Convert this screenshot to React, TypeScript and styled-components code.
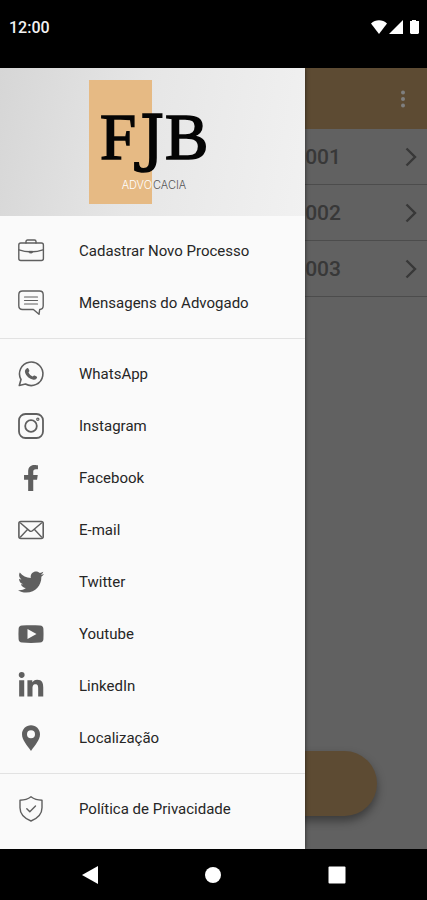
import React from "react";
import styled, { createGlobalStyle } from "styled-components";
import { FaFacebookF, FaTwitter, FaLinkedinIn } from "react-icons/fa";

const GlobalStyle = createGlobalStyle`
  *, *::before, *::after { box-sizing: border-box; }
  body {
    margin: 0;
    background: #000;
    font-family: Roboto, "Liberation Sans", sans-serif;
  }
  button { font: inherit; border: 0; padding: 0; background: none; cursor: pointer; }
`;

const Phone = styled.div`
  min-height: 100vh;
  display: flex;
  flex-direction: column;
  background: #000;
`;

const StatusBar = styled.header`
  height: 68px;
  padding: 18px 8px 0 9px;
  display: flex;
  align-items: flex-start;
  justify-content: space-between;
  color: #f2f2f2;
  font-size: 16px;
  line-height: 20px;
  font-weight: 500;
`;

const StatusIcons = styled.div`
  display: flex;
  align-items: center;
  padding-top: 2px;
  svg { display: block; }
`;

const Screen = styled.div`
  flex: 1;
  display: grid;
  grid-template-columns: minmax(0, 1fr);
  overflow: hidden;
  > * { grid-area: 1 / 1; }
`;

const Page = styled.main`
  display: flex;
  flex-direction: column;
  background: #c2c2c2;
`;

const AppBar = styled.div`
  height: 61px;
  padding: 0 14px;
  display: flex;
  align-items: center;
  justify-content: flex-end;
  background: #ba9666;
`;

const MenuButton = styled.button`
  width: 20px;
  height: 32px;
  display: grid;
  place-items: center;
`;

const ProcessList = styled.ul`
  list-style: none;
  margin: 0;
  padding: 0;
`;

const ProcessRow = styled.li`
  border-bottom: 1px solid #989898;
`;

const ProcessButton = styled.button`
  width: 100%;
  height: 55px;
  padding: 0 10px;
  display: flex;
  align-items: center;
  justify-content: flex-end;
  gap: 64px;
  color: #707070;
  font-size: 21px;
  font-weight: 500;
`;

const ActionButton = styled.button`
  height: 65px;
  margin: auto 50px 33px;
  border-radius: 33px;
  background: #ba9666;
  box-shadow: 0 5px 10px rgba(0, 0, 0, 0.4);
`;

const Scrim = styled.div`
  z-index: 1;
  background: rgba(0, 0, 0, 0.5);
`;

const Drawer = styled.aside`
  z-index: 2;
  width: calc(100% - 122px);
  background: #fafafa;
  box-shadow: 0 0 4px rgba(0, 0, 0, 0.6);
`;

const DrawerHeader = styled.div`
  height: 148px;
  padding-top: 12px;
  display: flex;
  justify-content: center;
  background: linear-gradient(100deg, #d6d6d6 0%, #e6e6e6 45%, #f1f1f1 100%);
`;

const MenuGroup = styled.ul`
  list-style: none;
  margin: 0;
  padding: 9px 0;
  & + & { border-top: 1px solid #e2e2e2; }
`;

const MenuLink = styled.a`
  height: 52px;
  padding: 0 17px;
  display: flex;
  align-items: center;
  gap: 34px;
  color: #262626;
  font-size: 15px;
  line-height: 20px;
  text-decoration: none;
  svg { display: block; flex: none; color: #5f5f5f; }
`;

const IconBox = styled.span`
  width: 28px;
  flex: none;
  display: grid;
  place-items: center;
`;

const NavBar = styled.nav`
  height: 51px;
  padding: 0 28px;
  display: grid;
  grid-template-columns: repeat(3, 1fr);
`;

const NavButton = styled.button`
  display: grid;
  place-items: center;
`;

const Line = ({ children }: { children: React.ReactNode }) => (
  <svg width="28" height="28" viewBox="0 0 28 28" fill="none" stroke="currentColor" strokeWidth="1.4" strokeLinecap="round" strokeLinejoin="round" aria-hidden="true">
    {children}
  </svg>
);

const Briefcase = () => (
  <Line>
    <rect x="1.8" y="6" width="24.6" height="17.5" rx="2" />
    <path d="M9 6V4.600C9 3.700 9.600 3 10.500 3h7c.9 0 1.500.7 1.500 1.600V6M2 12.800c4 1.300 8 2 10.500 2h3c2.500 0 6.500-.7 10.500-2" />
    <path d="M12.300 14.300h3.400l-.6 1.700h-2.200z" fill="currentColor" strokeWidth="0.8" />
  </Line>
);

const Message = () => (
  <Line>
    <path d="M5.500 2h17c2.200 0 3.700 1.500 3.700 3.700v11.100c0 2.100-1.400 3.600-3.500 3.700L22 25.300l-5.600-4.800H5.500c-2.200 0-3.700-1.500-3.700-3.700V5.700C1.800 3.500 3.300 2 5.500 2z" />
    <path d="M7.500 8h13M7.500 11.500h13M7.500 15h13" strokeWidth="1.2" />
  </Line>
);

const WhatsApp = () => (
  <Line>
    <path d="M2.300 25.500l1.700-6A11.700 11.700 0 1 1 8.500 24z" strokeWidth="1.6" />
    <path d="M10 8.200c.6-.4 1.200-.2 1.500.5l.8 1.800c.2.500 0 .9-.8 1.900.9 1.900 2.300 3.200 4.200 4 1-.9 1.300-1.200 1.900-.9l1.900.9c.6.3.7.7.5 1.400-.5 1.500-2 2.200-3.500 1.900-4.200-.8-7.400-3.700-8.500-7.500-.4-1.600.5-3.100 2-4z" fill="currentColor" stroke="none" />
  </Line>
);

const Instagram = () => (
  <Line>
    <rect x="2" y="2" width="24" height="24" rx="6.500" strokeWidth="1.8" />
    <circle cx="14" cy="14" r="5.800" strokeWidth="1.8" />
    <circle cx="20.800" cy="7.300" r="1.100" strokeWidth="1.2" />
  </Line>
);

const Mail = () => (
  <Line>
    <rect x="1.900" y="5.500" width="24.300" height="17" rx="2" strokeWidth="1.6" />
    <path d="M3.500 7l8.800 7.600c1 .9 2.400.9 3.400 0L24.500 7M3.500 21l7-7.500M24.500 21l-7-7.500" />
  </Line>
);

const Youtube = () => (
  <svg width="28" height="28" viewBox="0 0 28 28" aria-hidden="true">
    <path fill="currentColor" fillRule="evenodd" d="M5 5.600c6-.5 12-.5 18 0 2.200.2 3.300 1.200 3.400 3.200.2 3.500.2 7 0 10.500-.1 2-1.200 3-3.400 3.200-6 .5-12 .5-18 0-2.200-.2-3.300-1.200-3.400-3.200-.2-3.500-.2-7 0-10.500.1-2 1.200-3 3.400-3.200zM10.500 9v10l9-5z" />
  </svg>
);

const Pin = () => (
  <svg width="28" height="28" viewBox="0 0 28 28" aria-hidden="true">
    <path fill="currentColor" fillRule="evenodd" d="M14 1.300c-5 0-9 3.900-9 8.900C5 16 10 21 14 27c4-6 9-11 9-16.800 0-5-4-8.900-9-8.900zm0 5a4 4 0 1 1 0 8 4 4 0 0 1 0-8z" />
  </svg>
);

const Shield = () => (
  <Line>
    <path d="M14 1.800c3 2.300 6.500 3.400 11 3.500v7.500c0 6.200-3.700 10.300-11 13.200C6.700 23.100 3 19 3 12.800V5.300c4.500-.1 8-1.200 11-3.500z" />
    <path d="M9.800 13.700l3 3.100 5.700-5.700" />
  </Line>
);

const Logo = () => (
  <svg width="127" height="126" viewBox="0 0 127 126" role="img" aria-label="FJB Advocacia">
    <rect x="0" y="0" width="63" height="124" fill="#e6ba84" />
    <g fill="#050505" stroke="#050505" strokeWidth="1.6">
      <text x="11" y="79" fontSize="65" fontFamily='"Liberation Serif", serif'>F</text>
      <text x="51" y="79" fontSize="61" fontFamily='"DejaVu Serif", serif'>J</text>
      <text x="76" y="79" fontSize="65" fontFamily='"Liberation Serif", serif'>B</text>
    </g>
    <g fontSize="11" fontWeight="300" fontFamily='Inter, "Open Sans", sans-serif'>
      <text x="63" y="109" textAnchor="end" fill="#fff">ADVO</text>
      <text x="64" y="109" fill="#555">CACIA</text>
    </g>
  </svg>
);

const groups = [
  [
    { label: "Cadastrar Novo Processo", icon: <Briefcase /> },
    { label: "Mensagens do Advogado", icon: <Message /> },
  ],
  [
    { label: "WhatsApp", icon: <WhatsApp /> },
    { label: "Instagram", icon: <Instagram /> },
    { label: "Facebook", icon: <FaFacebookF size={26} aria-hidden /> },
    { label: "E-mail", icon: <Mail /> },
    { label: "Twitter", icon: <FaTwitter size={26} aria-hidden /> },
    { label: "Youtube", icon: <Youtube /> },
    { label: "LinkedIn", icon: <FaLinkedinIn size={28} aria-hidden /> },
    { label: "Localização", icon: <Pin /> },
  ],
  [{ label: "Política de Privacidade", icon: <Shield /> }],
];

export default function App() {
  return (
    <>
      <GlobalStyle />
      <Phone>
        <StatusBar>
          <span>12:00</span>
          <StatusIcons>
            <svg width="48" height="14" viewBox="0 0 48 14" fill="#fff" aria-hidden="true">
              <path d="M0 3.500C4.500-.8 11.500-.8 16 3.500L8 14z" />
              <path d="M32 0v14H18z" />
              <path d="M39 1h2V0h4v1h3v12l-1 1h-7l-1-1V2z" />
            </svg>
          </StatusIcons>
        </StatusBar>
        <Screen>
          <Page>
            <AppBar>
              <MenuButton aria-label="Mais opções">
                <svg width="6" height="20" viewBox="0 0 6 20" fill="#fff" aria-hidden="true">
                  <circle cx="3" cy="3.500" r="2" />
                  <circle cx="3" cy="10" r="2" />
                  <circle cx="3" cy="16.500" r="2" />
                </svg>
              </MenuButton>
            </AppBar>
            <ProcessList>
              {["001", "002", "003"].map((id) => (
                <ProcessRow key={id}>
                  <ProcessButton>
                    <span>{id}</span>
                    <svg width="12" height="20" viewBox="0 0 12 20" fill="none" stroke="currentColor" strokeWidth="2.4" aria-hidden="true">
                      <path d="M1.500 1.500L10 10l-8.500 8.500" />
                    </svg>
                  </ProcessButton>
                </ProcessRow>
              ))}
            </ProcessList>
            <ActionButton aria-label="Novo processo" />
          </Page>
          <Scrim />
          <Drawer>
            <DrawerHeader>
              <Logo />
            </DrawerHeader>
            {groups.map((items, i) => (
              <MenuGroup key={i}>
                {items.map(({ label, icon }) => (
                  <li key={label}>
                    <MenuLink href="#">
                      <IconBox>{icon}</IconBox>
                      {label}
                    </MenuLink>
                  </li>
                ))}
              </MenuGroup>
            ))}
          </Drawer>
        </Screen>
        <NavBar aria-label="Sistema">
          <NavButton aria-label="Voltar">
            <svg width="18" height="20" viewBox="0 0 18 20" fill="#fff" aria-hidden="true">
              <path d="M17 1v18L1 10z" />
            </svg>
          </NavButton>
          <NavButton aria-label="Início">
            <svg width="16" height="16" viewBox="0 0 16 16" fill="#fff" aria-hidden="true">
              <circle cx="8" cy="8" r="8" />
            </svg>
          </NavButton>
          <NavButton aria-label="Recentes">
            <svg width="18" height="18" viewBox="0 0 18 18" fill="#fff" aria-hidden="true">
              <rect x="0.5" y="0.5" width="17" height="17" rx="1" />
            </svg>
          </NavButton>
        </NavBar>
      </Phone>
    </>
  );
}
